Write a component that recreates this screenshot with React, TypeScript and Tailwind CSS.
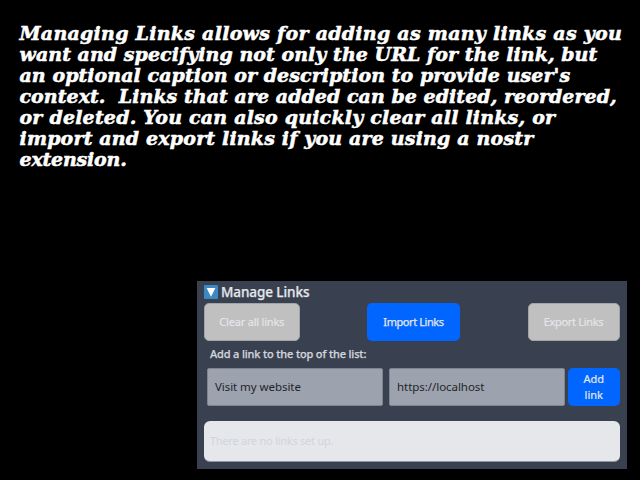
const caption = [
  { text: "Managing Links allows for adding as many links as you", spacing: "tracking-[0.27px]" },
  { text: "want and specifying not only the URL for the link, but", spacing: "tracking-[0.05px]" },
  { text: "an optional caption or description to provide user's", spacing: "tracking-[0.06px]" },
  { text: "context.  Links that are added can be edited, reordered,", spacing: "tracking-[0.05px]" },
  { text: "or deleted. You can also quickly clear all links, or", spacing: "tracking-[0.2px]" },
  { text: "import and export links if you are using a nostr", spacing: "tracking-[0.17px]" },
  { text: "extension.", spacing: "tracking-[-0.2px]" },
];

function Caption() {
  return (
    <div className="h-[281px] pt-[23px] pl-[19.5px] font-['DejaVu_Serif',serif] text-[19px] leading-[21px] font-bold italic text-white [-webkit-text-stroke:0.55px_white]">
      {caption.map((line) => (
        <div key={line.text} className="h-[21px]">
          <span className={`whitespace-pre ${line.spacing}`}>{line.text}</span>
        </div>
      ))}
    </div>
  );
}

function CollapseIcon() {
  return (
    <svg className="block" width="14" height="14" viewBox="0 0 14 14">
      <rect width="14" height="14" rx="0.8" fill="#3b88c3" />
      <path d="M2.6 3h8.8L7 11.8z" fill="#fff" />
    </svg>
  );
}

const button = "flex h-[38px] items-center justify-center rounded-[5px] text-center text-[11px] leading-4 whitespace-nowrap";

export default function App() {
  return (
    <div className="h-[480px] w-[640px] overflow-hidden bg-black">
      <Caption />
      <section className="ml-[197px] h-[188px] w-[430px] bg-[#394150] pt-1 pr-[7.5px] pl-[7px] font-['Noto_Sans',sans-serif]">
        <header className="flex h-[18px] items-start gap-[3px] text-[13.5px] leading-[15px] font-medium tracking-[-0.08px] text-[#e5e7eb] [-webkit-text-stroke:0.25px_#e5e7eb]">
          <CollapseIcon />
          <span className="whitespace-nowrap">Manage Links</span>
        </header>
        <div className="flex justify-between">
          <button className={`${button} w-[95.5px] border border-[#a2a4a8] bg-[#c0c0c0] tracking-[-0.2px] text-[#e5e7eb] [-webkit-text-stroke:0.15px_#e5e7eb]`}>Clear all links</button>
          <button className={`${button} w-[93px] bg-[#0066ff] tracking-[-0.42px] text-[#e5e7eb] [-webkit-text-stroke:0.25px_#e5e7eb]`}>Import Links</button>
          <button className={`${button} w-[92px] border border-[#a2a4a8] bg-[#c0c0c0] tracking-[-0.3px] text-[#e5e7eb] [-webkit-text-stroke:0.15px_#e5e7eb]`}>Export Links</button>
        </div>
        <div className="h-[27px] pl-[6px] text-[11px] leading-[26px] font-medium tracking-[-0.16px] text-[#d1d5db] [-webkit-text-stroke:0.25px_#d1d5db]">
          <span className="whitespace-nowrap">Add a link to the top of the list:</span>
        </div>
        <div className="flex pl-[3px]">
          <div className="mr-[6px] flex h-[38px] w-[176px] items-center rounded-[2px] border border-[#7f8590] bg-[#9ca3af] pl-[7px] text-[11.5px] tracking-[-0.06px] text-[#1f2328]">Visit my website</div>
          <div className="mr-[3px] flex h-[38px] w-[176px] items-center rounded-[2px] border border-[#7f8590] bg-[#9ca3af] pl-[7px] text-[11.5px] tracking-[-0.05px] text-[#1f2328]">https://localhost</div>
          <button className={`${button} w-[51.5px] bg-[#0066ff] text-[#e5e7eb] [-webkit-text-stroke:0.2px_#e5e7eb]`}>Add<br />link</button>
        </div>
        <div className="mt-[15px] flex h-[41px] items-center rounded-md border-b border-[#8f949d] bg-[#e5e7eb] pl-[6px] text-[11px] tracking-[-0.25px] text-[#d1d5db]">There are no links set up.</div>
      </section>
    </div>
  );
}
